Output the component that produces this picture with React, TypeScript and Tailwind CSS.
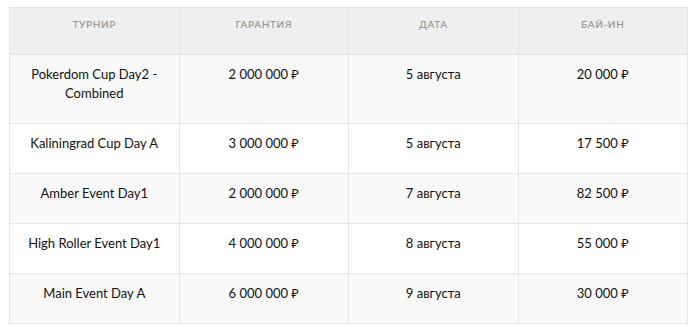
const rows = [
  { name: 'Pokerdom Cup Day2 - Combined', guarantee: '2 000 000 ₽', date: '5 августа', buyin: '20 000 ₽' },
  { name: 'Kaliningrad Cup Day A', guarantee: '3 000 000 ₽', date: '5 августа', buyin: '17 500 ₽' },
  { name: 'Amber Event Day1', guarantee: '2 000 000 ₽', date: '7 августа', buyin: '82 500 ₽' },
  { name: 'High Roller Event Day1', guarantee: '4 000 000 ₽', date: '8 августа', buyin: '55 000 ₽' },
  { name: 'Main Event Day A', guarantee: '6 000 000 ₽', date: '9 августа', buyin: '30 000 ₽' },
]

const headers = ['Турнир', 'Гарантия', 'Дата', 'Бай-ин']

export default function App() {
  return (
    <div className="bg-white w-[700px] h-[333px] pt-[7px] pl-[9px] font-['Lato','Noto_Sans',sans-serif]">
      <table className="w-[679px] table-fixed border-collapse text-center">
        <thead>
          <tr className="bg-[#efefef] h-[47px]">
            {headers.map((h) => (
              <th
                key={h}
                className="border border-[#e6e6e6] align-top pt-[9px] px-3 text-[10px] font-semibold uppercase tracking-[0.06em] text-[#9a9a9a]"
              >
                {h}
              </th>
            ))}
          </tr>
        </thead>
        <tbody>
          {rows.map((r, i) => (
            <tr key={r.name} className={i % 2 === 0 ? 'bg-[#f9f9f9]' : 'bg-white'}>
              {[r.name, r.guarantee, r.date, r.buyin].map((c, j) => (
                <td
                  key={j}
                  className="border border-[#e6e6e6] align-top pt-[10px] pb-[20px] px-3 text-[13px] leading-[19px] text-[#111111]"
                >
                  {c}
                </td>
              ))}
            </tr>
          ))}
        </tbody>
      </table>
    </div>
  )
}
